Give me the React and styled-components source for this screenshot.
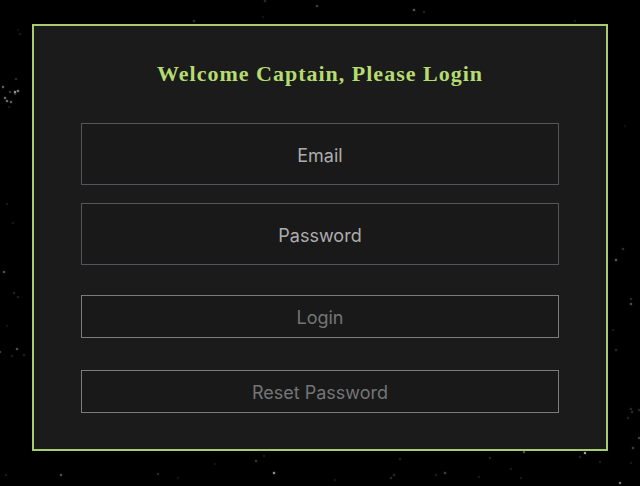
import React from "react";
import styled, { createGlobalStyle } from "styled-components";

const GlobalStyle = createGlobalStyle`
  *, *::before, *::after { box-sizing: border-box; }
  body { margin: 0; background: #000; }
`;

const Page = styled.main`
  position: relative;
  min-height: 100vh;
  padding: 24px 32px;
  overflow: hidden;
  background: #000;
  font-family: Inter, "Liberation Sans", sans-serif;
`;

const Sky = styled.svg`
  position: absolute;
  inset: 0;
  width: 100%;
  height: 100%;
  pointer-events: none;
`;

const Card = styled.form`
  position: relative;
  display: flex;
  flex-direction: column;
  padding: 35px 47px 36px;
  border: 2px solid #a9cb72;
  background: #1b1b1b;
`;

const Title = styled.h1`
  margin: 0 0 36px;
  color: #b5dc70;
  font-family: "Liberation Serif", serif;
  font-size: 22px;
  font-weight: 700;
  line-height: 26px;
  letter-spacing: 1px;
  text-align: center;
`;

const Fields = styled.div`
  display: grid;
  gap: 18px;
`;

const Field = styled.input`
  width: 100%;
  height: 62px;
  padding: 2px 16px 0;
  border: 1px solid #53545c;
  border-radius: 0;
  outline: none;
  background: #191919;
  color: #b0b0b0;
  font-family: inherit;
  font-size: 18px;
  text-align: center;

  &::placeholder { color: #adadad; opacity: 1; }
  &:focus { border-color: #a9cb72; }
`;

const Actions = styled.div`
  display: grid;
  gap: 32px;
  margin-top: 30px;
`;

const Action = styled.button`
  height: 43px;
  padding: 2px 16px 0;
  border: 1px solid #7c7c7c;
  background: #191919;
  color: #747577;
  font-family: inherit;
  font-size: 18px;
  cursor: pointer;
`;

// x, y, brightness
const stars = [
  [3, 87, 0.6], [10, 92, 0.35], [15, 92, 0.95], [18, 91, 0.8], [15, 94, 0.3],
  [5, 98, 0.7], [7, 101, 0.7], [11, 102, 0.6], [16, 79, 0.25], [9, 107, 0.15],
  [20, 34, 0.15], [18, 30, 0.1], [7, 204, 0.15], [13, 223, 0.15],
  [4, 272, 0.5], [14, 293, 0.2], [18, 297, 0.2], [7, 326, 0.12],
  [17, 349, 0.5], [0, 352, 0.4], [12, 356, 0.15], [24, 355, 0.2],
  [61, 475, 0.5], [6, 475, 0.15], [158, 474, 0.25], [178, 478, 0.12],
  [215, 464, 0.12], [256, 461, 0.35], [264, 456, 0.15], [274, 473, 0.9],
  [335, 480, 0.15], [391, 478, 0.25], [394, 475, 0.25], [400, 459, 0.2],
  [436, 475, 0.15], [445, 473, 0.4], [479, 477, 0.15], [490, 458, 0.2],
  [511, 469, 0.15], [521, 478, 0.15], [524, 452, 0.5], [580, 457, 0.2],
  [585, 453, 1], [600, 462, 0.15], [620, 483, 0.75], [631, 463, 0.15],
  [633, 448, 0.4], [639, 438, 0.4], [628, 418, 0.2], [632, 412, 0.25],
  [631, 409, 0.25], [639, 410, 0.25], [616, 350, 0.25], [613, 330, 0.15],
  [631, 304, 0.5], [631, 299, 0.25], [616, 260, 0.55], [623, 249, 0.3],
  [625, 126, 0.1], [317, 6, 0.4], [414, 10, 0.55], [424, 12, 0.2],
  [265, 1, 0.25], [194, 21, 0.3], [575, 21, 0.15], [263, 17, 0.12],
];

export default function App() {
  return (
    <>
      <GlobalStyle />
      <Page>
        <Sky aria-hidden="true">
          {stars.map(([x, y, glow]) => (
            <g key={`${x}-${y}`} fill="#e4e4e4" opacity={glow * 0.85}>
              <circle cx={x} cy={y} r="2" opacity="0.15" />
              <circle cx={x} cy={y} r="1" />
            </g>
          ))}
        </Sky>
        <Card onSubmit={(event) => event.preventDefault()}>
          <Title>Welcome Captain, Please Login</Title>
          <Fields>
            <Field type="email" aria-label="Email" placeholder="Email" autoComplete="email" />
            <Field
              type="password"
              aria-label="Password"
              placeholder="Password"
              autoComplete="current-password"
            />
          </Fields>
          <Actions>
            <Action type="submit">Login</Action>
            <Action type="button">Reset Password</Action>
          </Actions>
        </Card>
      </Page>
    </>
  );
}
